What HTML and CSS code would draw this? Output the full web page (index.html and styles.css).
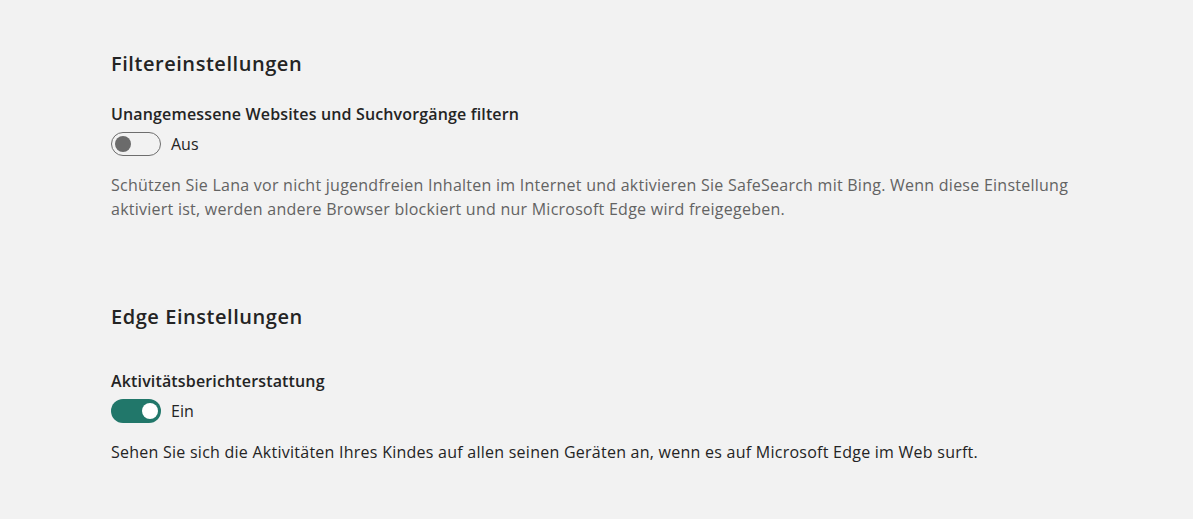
FILE: index.html
```html
<!DOCTYPE html>
<html lang="de">
<head>
<meta charset="utf-8">
<title>Einstellungen</title>
<link rel="stylesheet" href="styles.css">
</head>
<body>
<main class="page">
  <section class="section section-filter">
    <h2 class="section-title">Filtereinstellungen</h2>
    <div class="setting">
      <h3 class="setting-label">Unangemessene Websites und Suchvorgänge filtern</h3>
      <div class="toggle-row">
        <span class="toggle toggle-off"><span class="knob"></span></span>
        <span class="toggle-text">Aus</span>
      </div>
      <p class="setting-desc muted">Schützen Sie Lana vor nicht jugendfreien Inhalten im Internet und aktivieren Sie SafeSearch mit Bing. Wenn diese Einstellung aktiviert ist, werden andere Browser blockiert und nur Microsoft Edge wird freigegeben.</p>
    </div>
  </section>
  <section class="section section-edge">
    <h2 class="section-title">Edge Einstellungen</h2>
    <div class="setting setting-edge">
      <h3 class="setting-label">Aktivitätsberichterstattung</h3>
      <div class="toggle-row">
        <span class="toggle toggle-on"><span class="knob"></span></span>
        <span class="toggle-text">Ein</span>
      </div>
      <p class="setting-desc">Sehen Sie sich die Aktivitäten Ihres Kindes auf allen seinen Geräten an, wenn es auf Microsoft Edge im Web surft.</p>
    </div>
  </section>
</main>
</body>
</html>
```

FILE: styles.css
```css
html, body {
  margin: 0;
  padding: 0;
  background: #f2f2f2;
}
body {
  font-family: "Open Sans", "Noto Sans", sans-serif;
  color: #242424;
}
.page {
  padding: 50px 0 0 111px;
  width: 1000px;
}
.section-title {
  margin: 0;
  font-size: 20px;
  line-height: 28px;
  font-weight: 600;
  letter-spacing: 0.55px;
  color: #242424;
}
.setting {
  margin-top: 24px;
}
.setting-edge {
  margin-top: 38px;
}
.section-edge {
  margin-top: 82px;
}
.setting-label {
  margin: 0;
  font-size: 16px;
  line-height: 24px;
  font-weight: 600;
  letter-spacing: 0.15px;
}
.toggle-row {
  margin-top: 6px;
  display: flex;
  align-items: center;
  gap: 10px;
  height: 24px;
}
.toggle {
  box-sizing: border-box;
  width: 50px;
  height: 24px;
  border-radius: 12px;
  display: flex;
  align-items: center;
  padding: 0 3px;
}
.toggle-off {
  border: 1px solid #6e6e6e;
  background: transparent;
}
.toggle-off .knob {
  background: #6b6b6b;
}
.toggle-on {
  background: #21776a;
  justify-content: flex-end;
}
.toggle-on .knob {
  background: #ffffff;
}
.knob {
  width: 16px;
  height: 16px;
  border-radius: 50%;
}
.toggle-text {
  font-size: 16px;
  line-height: 24px;
}
.setting-desc {
  margin: 17px 0 0;
  font-size: 16px;
  line-height: 24px;
  letter-spacing: 0.25px;
}
.muted {
  color: #636363;
}
```
